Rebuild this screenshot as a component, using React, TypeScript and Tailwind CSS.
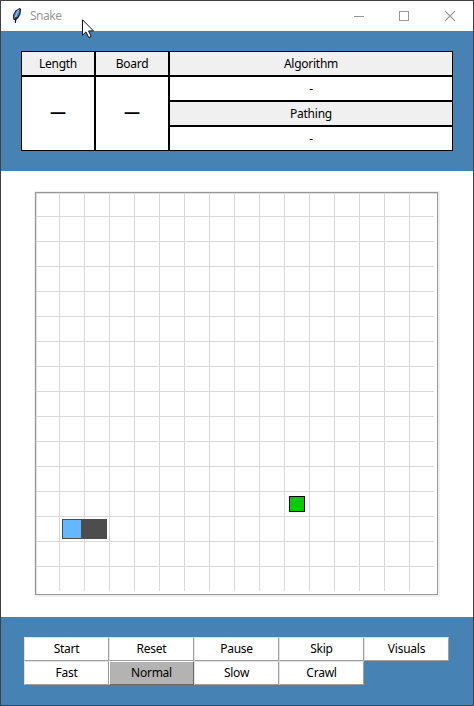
import React from "react";

const gridLines = Array.from({ length: 15 }, (_, i) => 25 * (i + 1));

const controls = [
  ["Start", "Reset", "Pause", "Skip", "Visuals"],
  ["Fast", "Normal", "Slow", "Crawl"],
];

function Feather() {
  return (
    <svg width="12" height="18" viewBox="0 0 12 18" className="ml-[10px]">
      <path d="M8.5 1 L10.2 2 L9.6 7 L7.4 11 L4.5 13.6 L2.2 12.4 L2 8 L4.2 3.8 Z" fill="#20242c" />
      <path d="M8.4 2.2 L8.6 6 L6.4 10 L4.6 11.8 L3 10.6 L3.4 7.6 L5.4 4 Z" fill="#4b8bd8" />
      <path d="M8 2.5 L5.6 6.5 L4 11.5" stroke="#c5dcf2" strokeWidth="0.8" fill="none" />
      <path d="M5 10 L4.4 16" stroke="#111111" strokeWidth="1.2" fill="none" />
    </svg>
  );
}

function TitleBar() {
  return (
    <header className="flex h-[30px] shrink-0 items-center bg-white">
      <Feather />
      <span className="ml-[7px] text-[12px] leading-[16px] tracking-[-0.5px] text-[#999999]">Snake</span>
      <svg width="104" height="12" viewBox="0 0 104 12" className="mr-[16px] ml-auto" fill="none" stroke="#999999" shapeRendering="crispEdges">
        <path d="M1 6.5H11" />
        <rect x="46.5" y="1.5" width="9" height="9" />
        <path d="M92 1L102 11M102 1L92 11" shapeRendering="auto" strokeWidth="1.1" />
      </svg>
    </header>
  );
}

function Cell({ children, head = false }: { children: React.ReactNode; head?: boolean }) {
  return (
    <div className={`flex h-[25px] items-center justify-center border border-black ${head ? "bg-[#f0f0f0]" : "bg-white"}`}>
      {children}
    </div>
  );
}

function Stat({ title }: { title: string }) {
  return (
    <div className="w-[74px]">
      <Cell head>{title}</Cell>
      <div className="flex h-[75px] items-center justify-center border border-black bg-white pb-[5px] text-[16px] font-bold tracking-normal">—</div>
    </div>
  );
}

function Board() {
  return (
    <div className="ml-[33px] h-[406px] w-[406px] bg-[#f0f0f0]">
      <svg width="406" height="406" viewBox="0 0 406 406" shapeRendering="crispEdges">
        <rect x="1" y="1" width="403" height="403" fill="#999999" />
        <rect x="2" y="2" width="401" height="401" fill="#dedede" />
        <rect x="3" y="3" width="400" height="400" fill="#ffffff" />
        {gridLines.map((n) => (
          <g key={n} fill="#d9d9d9">
            <rect x={n} y="2" width="1" height="398" />
            <rect x="2" y={n} width="398" height="1" />
          </g>
        ))}
        <rect x="28" y="328" width="45" height="20" fill="#4d4d4d" />
        <rect x="29" y="329" width="18" height="18" fill="#63b8ff" />
        <rect x="255" y="305" width="16" height="16" fill="#000000" />
        <rect x="256" y="306" width="14" height="14" fill="#00cd00" />
      </svg>
    </div>
  );
}

function ControlButton({ label }: { label: string }) {
  const active = label === "Normal";
  return (
    <button
      className={`flex h-[24px] w-[85px] items-center justify-center border tracking-[-0.25px] ${
        active
          ? "border-t-white border-r-[#696969] border-b-[#696969] border-l-white bg-[#b3b3b3]"
          : "border-t-[#e3e3e3] border-r-[#a0a0a0] border-b-[#a0a0a0] border-l-[#e3e3e3] bg-white"
      }`}
    >
      {label}
    </button>
  );
}

export default function App() {
  return (
    <div className="relative flex h-[706px] w-[474px] flex-col border border-[#404040] bg-white font-['Noto_Sans','Open_Sans',sans-serif] text-[12px] leading-[16px] tracking-[-0.25px] text-black">
      <TitleBar />
      <section className="flex h-[140px] shrink-0 bg-[#4682b4] pt-[20px] pl-[20px]">
        <Stat title="Length" />
        <Stat title="Board" />
        <div className="w-[284px]">
          <Cell head>Algorithm</Cell>
          <Cell>-</Cell>
          <Cell head>Pathing</Cell>
          <Cell>-</Cell>
        </div>
      </section>
      <main className="h-[446px] shrink-0 pt-[20px]">
        <Board />
      </main>
      <footer className="h-[88px] shrink-0 bg-[#4682b4] pt-[20px] pl-[23px]">
        {controls.map((row) => (
          <div key={row[0]} className="flex">
            {row.map((label) => (
              <ControlButton key={label} label={label} />
            ))}
          </div>
        ))}
      </footer>
      <svg width="13" height="20" viewBox="0 0 13 20" className="absolute top-[18px] left-[81px]">
        <path d="M0.5 0.8V16.2L4 12.9L6.7 18.5L9.2 17.4L6.6 11.9H11.5Z" fill="#ffffff" stroke="#11111f" strokeWidth="1" />
      </svg>
    </div>
  );
}
